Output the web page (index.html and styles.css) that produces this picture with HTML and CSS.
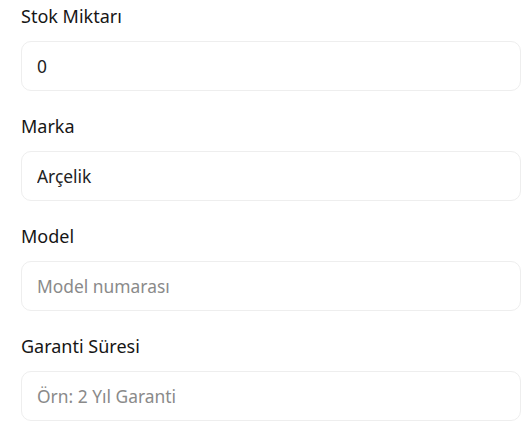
FILE: index.html
```html
<!DOCTYPE html>
<html lang="tr">
<head>
<meta charset="utf-8">
<link rel="stylesheet" href="styles.css">
</head>
<body>
<form class="form">
  <div class="field">
    <label class="label" for="stok">Stok Miktarı</label>
    <input class="input" id="stok" type="text" value="0">
  </div>
  <div class="field">
    <label class="label" for="marka">Marka</label>
    <input class="input" id="marka" type="text" value="Arçelik">
  </div>
  <div class="field">
    <label class="label" for="model">Model</label>
    <input class="input" id="model" type="text" placeholder="Model numarası">
  </div>
  <div class="field">
    <label class="label" for="garanti">Garanti Süresi</label>
    <input class="input" id="garanti" type="text" placeholder="Örn: 2 Yıl Garanti">
  </div>
</form>
</body>
</html>
```
FILE: styles.css
```css
html, body {
  margin: 0;
  padding: 0;
  background: #ffffff;
}
body {
  font-family: "Noto Sans", "Open Sans", sans-serif;
}
.form {
  display: flex;
  flex-direction: column;
  gap: 23px;
  padding: 4px 4px 0 21px;
}
.field {
  display: flex;
  flex-direction: column;
}
.label {
  font-size: 18px;
  line-height: 24px;
  color: #161616;
  margin-bottom: 13px;
}
.input {
  box-sizing: border-box;
  height: 50px;
  width: 100%;
  border: 1px solid #eeeeee;
  border-radius: 10px;
  padding: 0 15px;
  font-family: "Noto Sans", "Open Sans", sans-serif;
  font-size: 17.4px;
  color: #222222;
  background: #fff;
  outline: none;
}
.input::placeholder {
  color: #8a8a8a;
}
```
